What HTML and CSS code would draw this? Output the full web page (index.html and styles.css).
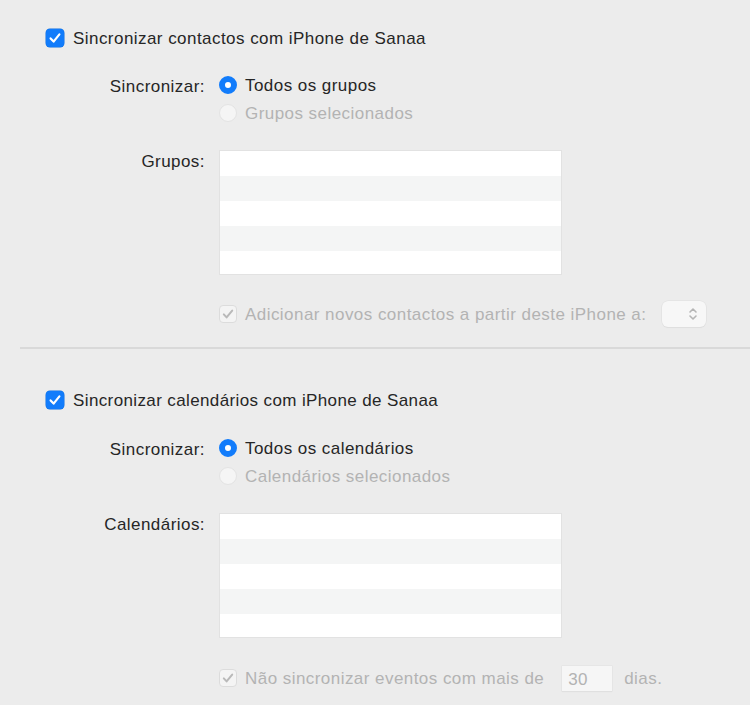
FILE: index.html
```html
<!DOCTYPE html>
<html lang="pt">
<head>
<meta charset="utf-8">
<link rel="stylesheet" href="styles.css">
</head>
<body>
<div class="panel">
  <section class="section first">
    <div class="check-row">
      <span class="checkbox on"><svg viewBox="0 0 18 18" width="18" height="18"><path d="M4.6 9.4 L7.6 12.6 L13.4 5.4" fill="none" stroke="#fff" stroke-width="2.2" stroke-linecap="round" stroke-linejoin="round"/></svg></span>
      <span class="txt">Sincronizar contactos com iPhone de Sanaa</span>
    </div>
    <div class="form-row sync">
      <div class="key">Sincronizar:</div>
      <div class="vals">
        <div class="radio-row"><span class="radio on"></span><span class="txt">Todos os grupos</span></div>
        <div class="radio-row dis"><span class="radio"></span><span class="txt">Grupos selecionados</span></div>
      </div>
    </div>
    <div class="form-row list-row">
      <div class="key">Grupos:</div>
      <div class="list"><div></div><div></div><div></div><div></div><div></div></div>
    </div>
    <div class="form-row opt">
      <div class="key"></div>
      <div class="opt-line dis">
        <span class="checkbox off"><svg viewBox="0 0 18 18" width="18" height="18"><path d="M4.8 9.4 L7.6 12.4 L13.2 5.6" fill="none" stroke="#b9b9b9" stroke-width="2" stroke-linecap="round" stroke-linejoin="round"/></svg></span>
        <span class="txt">Adicionar novos contactos a partir deste iPhone a:</span>
        <span class="popup"><svg viewBox="0 0 10 16" width="10" height="16"><path d="M2 6 L5 3 L8 6 M2 10 L5 13 L8 10" fill="none" stroke="#b5b5b5" stroke-width="1.6" stroke-linecap="round" stroke-linejoin="round"/></svg></span>
      </div>
    </div>
  </section>
  <hr class="divider">
  <section class="section second">
    <div class="check-row">
      <span class="checkbox on"><svg viewBox="0 0 18 18" width="18" height="18"><path d="M4.6 9.4 L7.6 12.6 L13.4 5.4" fill="none" stroke="#fff" stroke-width="2.2" stroke-linecap="round" stroke-linejoin="round"/></svg></span>
      <span class="txt">Sincronizar calendários com iPhone de Sanaa</span>
    </div>
    <div class="form-row sync">
      <div class="key">Sincronizar:</div>
      <div class="vals">
        <div class="radio-row"><span class="radio on"></span><span class="txt">Todos os calendários</span></div>
        <div class="radio-row dis"><span class="radio"></span><span class="txt">Calendários selecionados</span></div>
      </div>
    </div>
    <div class="form-row list-row">
      <div class="key">Calendários:</div>
      <div class="list"><div></div><div></div><div></div><div></div><div></div></div>
    </div>
    <div class="form-row opt last">
      <div class="key"></div>
      <div class="opt-line dis">
        <span class="checkbox off"><svg viewBox="0 0 18 18" width="18" height="18"><path d="M4.8 9.4 L7.6 12.4 L13.2 5.6" fill="none" stroke="#b9b9b9" stroke-width="2" stroke-linecap="round" stroke-linejoin="round"/></svg></span>
        <span class="txt">Não sincronizar eventos com mais de</span>
        <span class="days">30</span>
        <span class="txt">dias.</span>
      </div>
    </div>
  </section>
</div>
</body>
</html>
```
FILE: styles.css
```css
html, body {
  margin: 0;
  padding: 0;
  background: #ffffff;
}
body {
  font-family: "Liberation Sans", Arial, sans-serif;
  font-size: 17px;
  letter-spacing: 0.45px;
  color: #262626;
}
.panel {
  background: #ececec;
  height: 705px;
  overflow: hidden;
}
.section {
  display: flex;
  flex-direction: column;
}
.section.first { padding-top: 28px; }
.section.second { padding-top: 41px; }
.txt { padding-top: 2px; }
.check-row {
  display: flex;
  align-items: center;
  height: 20px;
  padding-left: 46px;
  gap: 9px;
}
.second .check-row { letter-spacing: 0.38px; }
.checkbox {
  width: 18px;
  height: 18px;
  border-radius: 4px;
  box-sizing: border-box;
  display: inline-flex;
  flex: none;
}
.checkbox.on {
  background: #127cfb;
  box-shadow: 0 0 0 0.5px #0f6fe0;
}
.checkbox.off {
  background: #f4f4f4;
  border: 1px solid #dcdcdc;
}
.checkbox.off svg { margin: -1px; }
.form-row {
  display: flex;
  gap: 14px;
}
.key {
  width: 205px;
  flex: none;
  text-align: right;
  line-height: 20px;
  padding-top: 2px;
  box-sizing: border-box;
}
.sync { margin-top: 27px; }
.second .sync { margin-top: 28px; }
.vals {
  display: flex;
  flex-direction: column;
  gap: 8px;
}
.radio-row {
  display: flex;
  align-items: center;
  height: 20px;
  gap: 8px;
}
.radio {
  width: 18px;
  height: 18px;
  border-radius: 50%;
  box-sizing: border-box;
  flex: none;
  background: #f5f5f5;
  border: 1px solid #e3e3e3;
}
.radio.on {
  border: 6px solid #127cfb;
  background: #ffffff;
}
.dis { color: #b3b3b3; }
.list-row { margin-top: 28px; }
.list-row .key { padding-top: 1px; }
.list {
  width: 341px;
  height: 123px;
  margin-left: 1px;
  display: flex;
  flex-direction: column;
  background: #fff;
  box-shadow: 0 0 0 1px #e2e2e2;
}
.list div { height: 25px; flex: none; }
.list div:nth-child(2n) { background: #f4f5f5; }
.list div:last-child { height: 23px; }
.opt { margin-top: 30px; }
.opt.last { margin-top: 31px; }
.opt-line {
  display: flex;
  align-items: center;
  height: 20px;
  gap: 8px;
}
.popup {
  margin-left: 8px;
  width: 44px;
  height: 26px;
  border-radius: 6px;
  background: #f7f7f7;
  box-shadow: 0 0 0 0.5px #dedede, 0 1px 1px rgba(0,0,0,0.06);
  display: inline-flex;
  align-items: center;
  justify-content: flex-end;
  padding-right: 8px;
  box-sizing: border-box;
}
.days {
  margin-left: 10px;
  margin-right: 4px;
  width: 50px;
  height: 25px;
  box-sizing: border-box;
  padding-left: 6px;
  padding-top: 1px;
  line-height: 25px;
  background: #f6f6f6;
  box-shadow: 0 0 0 0.5px #e0e0e0, 0 1px 1px rgba(0,0,0,0.05);
}
.divider {
  margin: 23px 0 0 20px;
  border: 0;
  height: 2px;
  background: #d9d9d9;
}
```
